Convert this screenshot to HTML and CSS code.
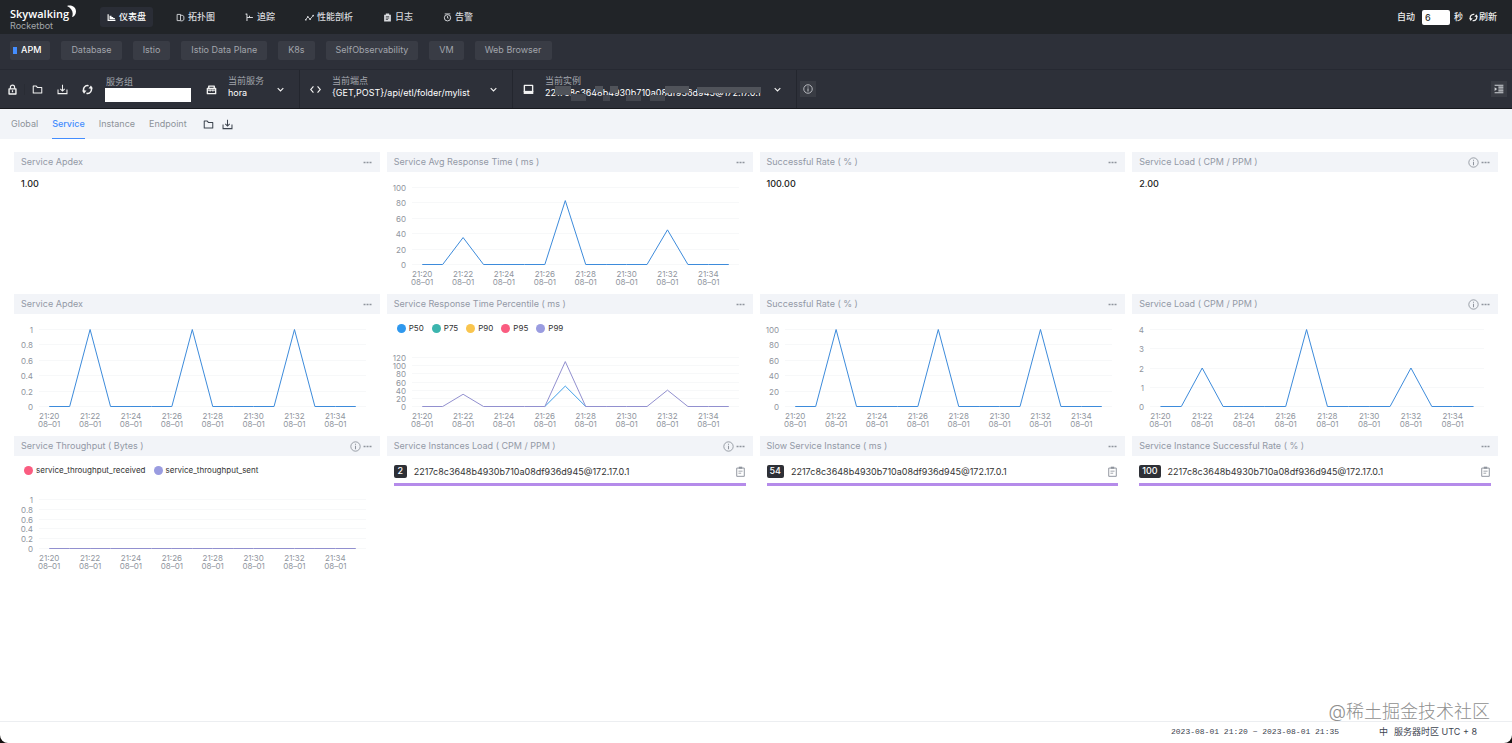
FILE: index.html
```html
<!DOCTYPE html>
<html lang="zh-CN">
<head>
  <meta charset="UTF-8">
  <meta name="viewport" content="width=device-width, initial-scale=1.0">
  <title>SkyWalking</title>
  <link rel="stylesheet" href="styles.css">
</head>
<body>
  <!-- shared icons -->
  <svg class="sprite" aria-hidden="true">
    <symbol id="i-folder" viewBox="0 0 16 16"><path d="M1.8 13V3h4.4l1.6 2h6.4v8z" fill="none" stroke="currentColor" stroke-width="1.5" stroke-linejoin="round"/></symbol>
    <symbol id="i-download" viewBox="0 0 16 16"><path d="M8 1v9M4.8 7L8 10.2 11.2 7M1.5 8v6h13V8" fill="none" stroke="currentColor" stroke-width="1.5"/></symbol>
    <symbol id="i-refresh" viewBox="0 0 16 16"><path d="M3.2 11A5.6 5.6 0 0 1 9.5 2.6M12.8 5A5.6 5.6 0 0 1 6.5 13.4" fill="none" stroke="currentColor" stroke-width="2.2"/><path d="M0 9.5h6.5L3 14zM9.5 6.5H16L13 2z" fill="currentColor"/></symbol>
    <symbol id="i-info" viewBox="0 0 16 16"><circle cx="8" cy="8" r="6.8" fill="none" stroke="currentColor" stroke-width="1.3"/><path d="M8 7v5M8 4v1.6" stroke="currentColor" stroke-width="1.5"/></symbol>
    <symbol id="i-more" viewBox="0 0 16 16"><path d="M1 6.5h3.5v3H1zM6.3 6.5h3.5v3H6.3zM11.6 6.5h3.5v3h-3.5z" fill="currentColor"/></symbol>
    <symbol id="i-down" viewBox="0 0 16 16"><path d="M3 5.5l5 5 5-5" fill="none" stroke="currentColor" stroke-width="2"/></symbol>
    <symbol id="i-copy" viewBox="0 0 16 16"><path d="M2.5 3h11v12h-11z" fill="none" stroke="currentColor" stroke-width="1.4" stroke-linejoin="round"/><path d="M5.5 1h5v3h-5z" fill="currentColor"/><path d="M5 7.5h6M5 10.5h4" stroke="currentColor" stroke-width="1.2"/></symbol>
  </svg>

  <div class="app">
    <header class="topbar">
      <a class="logo" href="#">
        <span class="logo-name">Skywalking<svg class="moon" viewBox="0 0 10 14"><path d="M0 .8C6-.6 10 2.5 10 7c0 3.500-2 5.500-4.500 6.200C7.500 9 6 3.500 0 .8z" fill="#fff"/></svg></span>
        <span class="logo-sub">Rocketbot</span>
      </a>
      <nav class="main-nav">
        <a class="active" href="#"><svg class="icon" viewBox="0 0 16 16"><path d="M1 2h2v10h12v2H1z" fill="currentColor"/><path d="M4.5 5H8v2h3v2h3v2H4.5z" fill="currentColor"/></svg>仪表盘</a>
        <a href="#"><svg class="icon" viewBox="0 0 16 16"><path d="M2 2.5h6v11H2zM8 4h3l3 2v6l-3 2H8" fill="none" stroke="currentColor" stroke-width="1.6"/></svg>拓扑图</a>
        <a href="#"><svg class="icon" viewBox="0 0 16 16"><path d="M1 2h3M3.5 2v12M3.5 8H14M8 5v3" fill="none" stroke="currentColor" stroke-width="1.8"/></svg>追踪</a>
        <a href="#"><svg class="icon" viewBox="0 0 16 16"><path d="M1 12l4-5 4 4 6-7" fill="none" stroke="currentColor" stroke-width="1.5"/><circle cx="1.5" cy="12" r="1.5" fill="currentColor"/><circle cx="5" cy="7" r="1.5" fill="currentColor"/><circle cx="9" cy="11" r="1.5" fill="currentColor"/><circle cx="14.5" cy="4.5" r="1.5" fill="currentColor"/></svg>性能剖析</a>
        <a href="#"><svg class="icon" viewBox="0 0 16 16"><path d="M2 3h3V1h6v2h3v12H2z" fill="currentColor"/><path d="M5 6.5h6M5 9h6M5 11.5h4" stroke="#212428" stroke-width="1.2"/></svg>日志</a>
        <a href="#"><svg class="icon" viewBox="0 0 16 16"><circle cx="8" cy="8.5" r="5.6" fill="none" stroke="currentColor" stroke-width="1.7"/><path d="M8 5v4h2M3 1.5h10" fill="none" stroke="currentColor" stroke-width="1.5"/></svg>告警</a>
      </nav>
      <div class="reload">
        <label for="auto">自动</label>
        <input id="auto" type="text" value="6">
        <span class="unit">秒</span>
        <button type="button"><svg class="icon"><use href="#i-refresh"/></svg>刷新</button>
      </div>
    </header>

    <nav class="groups">
      <button type="button" class="active">APM</button>
      <button type="button">Database</button>
      <button type="button">Istio</button>
      <button type="button">Istio Data Plane</button>
      <button type="button">K8s</button>
      <button type="button">SelfObservability</button>
      <button type="button">VM</button>
      <button type="button">Web Browser</button>
    </nav>

    <div class="toolbar">
      <button type="button" class="tool lock" aria-label="lock"><svg viewBox="0 0 16 16"><path d="M3 7h10v7.5H3z" fill="none" stroke="currentColor" stroke-width="2" stroke-linejoin="round"/><path d="M5 7V4.5a3 3 0 0 1 6 0V7M8 9v3" fill="none" stroke="currentColor" stroke-width="1.8"/></svg></button>
      <button type="button" class="tool" aria-label="open"><svg><use href="#i-folder"/></svg></button>
      <button type="button" class="tool" aria-label="export"><svg><use href="#i-download"/></svg></button>
      <button type="button" class="tool" aria-label="reload"><svg><use href="#i-refresh"/></svg></button>
      <div class="field group">
        <label for="group">服务组</label>
        <input id="group" type="text">
      </div>
      <div class="selector service">
        <svg class="kind" viewBox="0 0 16 16"><path d="M2 6.5h12V14H2zM4 6V3h8v3" fill="none" stroke="currentColor" stroke-width="2" stroke-linejoin="round"/><path d="M2 9h12M6 8v3M10 8v3" stroke="currentColor" stroke-width="1.4"/></svg>
        <div class="field">
          <label for="service">当前服务</label>
          <select id="service"><option>hora</option></select>
        </div>
        <svg class="arrow"><use href="#i-down"/></svg>
      </div>
      <div class="selector endpoint">
        <svg class="kind" viewBox="0 0 16 16"><path d="M5 3.5L1 8l4 4.5M11 3.5L15 8l-4 4.5" fill="none" stroke="currentColor" stroke-width="1.7"/></svg>
        <div class="field">
          <label for="endpoint">当前端点</label>
          <select id="endpoint"><option>{GET,POST}/api/etl/folder/mylist</option></select>
        </div>
        <svg class="arrow"><use href="#i-down"/></svg>
      </div>
      <div class="selector instance">
        <svg class="kind" viewBox="0 0 16 16"><path d="M2 2h12v9H2z" fill="none" stroke="currentColor" stroke-width="2" stroke-linejoin="round"/><path d="M1 10h14v4.5H1z" fill="currentColor"/></svg>
        <div class="field">
          <label for="instance">当前实例</label>
          <select id="instance"><option>2217c8c3648b4930b710a08df936d945@172.17.0.1</option></select>
          <svg class="mask" viewBox="0 0 217 16" aria-hidden="true"><path d="M10 0h16v9H10zM50 0h8v6h-8zM65 0h8v7h-8zM120 0h24v7h-24zM152 1h64v6h-64z" fill="#50535a"/><path d="M26 8h15v7H26zM58 9h7v6h-7zM81 9h15v6H81zM105 9h15v6h-15z" fill="#43464e"/></svg>
        </div>
        <svg class="arrow"><use href="#i-down"/></svg>
      </div>
      <button type="button" class="square" aria-label="info"><svg><use href="#i-info"/></svg></button>
      <button type="button" class="square last" aria-label="panel"><svg viewBox="0 0 16 16"><path d="M1 2h14M7 5h8M7 8h8M7 11h8M1 14h14" stroke="currentColor" stroke-width="1.8"/><path d="M1 5l4 3-4 3z" fill="currentColor"/></svg></button>
    </div>

    <nav class="tabs">
      <a href="#">Global</a>
      <a href="#" class="active">Service</a>
      <a href="#">Instance</a>
      <a href="#">Endpoint</a>
      <div class="tab-tools">
        <button type="button" aria-label="open"><svg><use href="#i-folder"/></svg></button>
        <button type="button" aria-label="export"><svg><use href="#i-download"/></svg></button>
      </div>
    </nav>

    <main class="board">
      <section class="panel">
        <h2>Service Apdex<svg class="more"><use href="#i-more"/></svg></h2>
        <p class="value">1.00</p>
      </section>
      <section class="panel">
        <h2>Service Avg Response Time ( ms )<svg class="more"><use href="#i-more"/></svg></h2>
        <div class="chart" data-chart="avg"></div>
      </section>
      <section class="panel">
        <h2>Successful Rate ( % )<svg class="more"><use href="#i-more"/></svg></h2>
        <p class="value">100.00</p>
      </section>
      <section class="panel">
        <h2>Service Load ( CPM / PPM )<svg class="tip"><use href="#i-info"/></svg><svg class="more"><use href="#i-more"/></svg></h2>
        <p class="value">2.00</p>
      </section>

      <section class="panel">
        <h2>Service Apdex<svg class="more"><use href="#i-more"/></svg></h2>
        <div class="chart" data-chart="apdex"></div>
      </section>
      <section class="panel">
        <h2>Service Response Time Percentile ( ms )<svg class="more"><use href="#i-more"/></svg></h2>
        <ul class="legend">
          <li class="blue">P50</li>
          <li class="teal">P75</li>
          <li class="yellow">P90</li>
          <li class="red">P95</li>
          <li class="purple">P99</li>
        </ul>
        <div class="chart" data-chart="percentile"></div>
      </section>
      <section class="panel">
        <h2>Successful Rate ( % )<svg class="more"><use href="#i-more"/></svg></h2>
        <div class="chart" data-chart="rate"></div>
      </section>
      <section class="panel">
        <h2>Service Load ( CPM / PPM )<svg class="tip"><use href="#i-info"/></svg><svg class="more"><use href="#i-more"/></svg></h2>
        <div class="chart" data-chart="load"></div>
      </section>

      <section class="panel">
        <h2>Service Throughput ( Bytes )<svg class="tip"><use href="#i-info"/></svg><svg class="more"><use href="#i-more"/></svg></h2>
        <ul class="legend">
          <li class="red">service_throughput_received</li>
          <li class="purple">service_throughput_sent</li>
        </ul>
        <div class="chart" data-chart="throughput"></div>
      </section>
      <section class="panel">
        <h2>Service Instances Load ( CPM / PPM )<svg class="tip"><use href="#i-info"/></svg><svg class="more"><use href="#i-more"/></svg></h2>
        <div class="rank"><b>2</b><span>2217c8c3648b4930b710a08df936d945@172.17.0.1</span><svg><use href="#i-copy"/></svg></div>
      </section>
      <section class="panel">
        <h2>Slow Service Instance ( ms )<svg class="more"><use href="#i-more"/></svg></h2>
        <div class="rank"><b>54</b><span>2217c8c3648b4930b710a08df936d945@172.17.0.1</span><svg><use href="#i-copy"/></svg></div>
      </section>
      <section class="panel">
        <h2>Service Instance Successful Rate ( % )<svg class="more"><use href="#i-more"/></svg></h2>
        <div class="rank"><b>100</b><span>2217c8c3648b4930b710a08df936d945@172.17.0.1</span><svg><use href="#i-copy"/></svg></div>
      </section>
    </main>

    <footer class="footer">
      <span class="range">2023-08-01 21:20 ~ 2023-08-01 21:35</span>
      <span class="lang">中</span>
      <span>服务器时区 UTC + 8</span>
    </footer>
    <div class="watermark">@稀土掘金技术社区</div>
  </div>

  <script src="charts.js"></script>
</body>
</html>
```
FILE: styles.css
```css
* {
  box-sizing: border-box;
}

body {
  margin: 0;
  background: #14100f;
  font-family: Inter, "Noto Sans CJK SC", sans-serif;
  font-size: 9px;
  line-height: 12px;
  color: #3d444f;
}

a {
  color: inherit;
  text-decoration: none;
}

button, input, select {
  font: inherit;
  color: inherit;
  margin: 0;
  padding: 0;
  border: 0;
  background: none;
}

button {
  cursor: pointer;
}

svg {
  display: block;
  flex: none;
}

.sprite {
  position: absolute;
  width: 0;
  height: 0;
}

.app {
  position: relative;
  display: flex;
  flex-direction: column;
  min-height: 100vh;
  background: #fff;
  border-radius: 0 0 8px 8px;
  overflow: hidden;
}

.icon {
  width: 9px;
  height: 9px;
}

/* top bar */
.topbar {
  display: flex;
  align-items: center;
  height: 34px;
  padding: 0 15px 0 10px;
  background: #212428;
  color: #d8dade;
  font-weight: 500;
}

.logo {
  width: 90px;
  padding-top: 2px;
}

.logo-name {
  display: flex;
  font: 600 11px/14px "Open Sans", sans-serif;
  color: #fff;
}

.moon {
  width: 9px;
  height: 13px;
  margin: -2px 0 0 -2px;
}

.logo-sub {
  display: block;
  font-size: 9px;
  font-weight: 400;
  line-height: 9px;
  color: #a3a6ab;
}

.main-nav {
  display: flex;
  gap: 16px;
}

.main-nav a {
  display: flex;
  align-items: center;
  gap: 3px;
  height: 20px;
  padding: 0 7px;
  border-radius: 3px;
}

.main-nav .active {
  background: #2a2d36;
  color: #fff;
}

.reload {
  display: flex;
  align-items: center;
  margin-left: auto;
  color: #eee;
}

.reload input {
  width: 28px;
  height: 15px;
  margin: 0 4px 0 7px;
  padding: 0 3px;
  border-radius: 2px;
  background: #fff;
  color: #333;
}

.unit {
  margin-right: 6px;
}

.reload button {
  display: flex;
  align-items: center;
  gap: 1px;
}

/* dashboard groups */
.groups {
  display: flex;
  align-items: center;
  gap: 11px;
  height: 35px;
  padding: 0 10px 3px;
  background: #2d3039;
}

.groups button {
  height: 19px;
  padding: 0 10px;
  border-radius: 2px;
  background: #393c45;
  color: #a2a5ac;
}

.groups .active {
  display: flex;
  align-items: center;
  gap: 4px;
  padding: 0 9px 0 3px;
  color: #fff;
  font-weight: 500;
}

.groups .active::before {
  content: "";
  width: 4px;
  height: 7px;
  background: #448dfe;
}

/* selectors */
.toolbar {
  display: flex;
  align-items: center;
  height: 40px;
  padding-right: 5px;
  border-top: 1px solid #262932;
  border-bottom: 1px solid #17191e;
  background: #2d3039;
  color: #f2f2f2;
}

.tool {
  display: flex;
  justify-content: center;
  width: 25px;
}

.tool svg, .kind {
  width: 11px;
  height: 11px;
}

.lock {
  border-right: 1px solid #292c34;
}

.field {
  position: relative;
  display: flex;
  flex-direction: column;
  flex: 1;
  padding-bottom: 4px;
}

.field label {
  padding-left: 1px;
  line-height: 12px;
  white-space: nowrap;
  color: #a2a5ac;
}

.group {
  flex: none;
  width: 86px;
  margin: 0 5px;
  padding-bottom: 0;
}

.group input {
  height: 14px;
  background: #fff;
  color: #333;
}

.selector {
  display: flex;
  align-items: center;
  gap: 11px;
  height: 100%;
  padding: 0 14px 0 10px;
  border-right: 1px solid #23262e;
}

.service {
  width: 104px;
}

.endpoint {
  width: 213px;
}

.instance {
  width: 284px;
}

.selector .field {
  min-width: 0;
}

.selector label {
  padding: 0;
}

.selector select {
  height: 12px;
  appearance: none;
  outline: none;
  color: #fff;
}

.arrow {
  width: 9px;
  height: 9px;
}

.mask {
  position: absolute;
  left: 0;
  bottom: 1px;
  width: 217px;
  height: 16px;
}

.square {
  display: flex;
  align-items: center;
  justify-content: center;
  width: 16px;
  height: 16px;
  margin-left: 3px;
  background: #393c44;
  color: #d0d2d6;
}

.square svg {
  width: 10px;
  height: 10px;
}

.last {
  margin-left: auto;
}

/* tabs */
.tabs {
  display: flex;
  align-items: center;
  gap: 14px;
  height: 30px;
  padding: 0 11px;
  background: #f2f4f8;
  color: #8d9299;
}

.tabs a {
  height: 30px;
  line-height: 29px;
}

.tabs .active {
  border-bottom: 1px solid #448dfe;
  color: #448dfe;
  font-weight: 500;
}

.tab-tools {
  display: flex;
  gap: 8px;
  padding-left: 2px;
  color: #3d444f;
}

.tab-tools svg {
  width: 11px;
  height: 11px;
}

/* panels */
.board {
  display: grid;
  grid-template-columns: repeat(4, minmax(0, 1fr));
  grid-auto-rows: 134px;
  gap: 8px 7px;
  flex: 1;
  padding: 13px 14px;
}

.panel h2 {
  display: flex;
  align-items: center;
  height: 20px;
  margin: 0;
  padding: 0 8px 0 7px;
  background: #f2f4f8;
  color: #9299a6;
  font-size: 9px;
  font-weight: 400;
}

.panel h2 svg {
  width: 9px;
  height: 9px;
  color: #8f949d;
}

.panel h2 svg:first-of-type {
  margin-left: auto;
}

.panel h2 .tip {
  width: 11px;
  height: 11px;
  margin-right: 2px;
}

.value {
  margin: 6px 7px;
  color: #222;
  font-weight: 500;
}

.legend {
  display: flex;
  gap: 8px;
  height: 28px;
  margin: 0;
  padding: 0 10px;
  list-style: none;
  align-items: center;
  font-size: 8px;
  color: #333;
}

.legend li {
  display: flex;
  align-items: center;
  gap: 3px;
}

.legend li::before {
  content: "";
  width: 9px;
  height: 9px;
  border-radius: 50%;
}

.legend .blue::before { background: #2f98ee; }
.legend .teal::before { background: #3cb5ae; }
.legend .yellow::before { background: #f9c54e; }
.legend .red::before { background: #fa5c80; }
.legend .purple::before { background: #9a9ce0; }

.chart text {
  font-size: 8px;
  fill: #90959e;
}

.chart .grid {
  stroke: #f7f8f9;
}

.chart polyline {
  fill: none;
  stroke-width: 1;
}

.rank {
  display: flex;
  align-items: center;
  height: 30px;
  margin: 0 7px;
  padding-top: 4px;
  border-bottom: 3px solid #b58bea;
  color: #333;
}

.rank b {
  min-width: 13px;
  height: 13px;
  margin-right: 7px;
  padding: 0 3px;
  border-radius: 2px;
  background: #2e3036;
  color: #fff;
  font-weight: 500;
  text-align: center;
}

.rank svg {
  width: 11px;
  height: 11px;
  margin-left: auto;
  color: #8f949d;
}

/* footer */
.footer {
  display: flex;
  align-items: center;
  justify-content: flex-end;
  height: 22px;
  padding: 0 35px 2px 0;
  border-top: 1px solid #eceef1;
}

.range {
  font-family: "Liberation Mono", monospace;
  font-size: 8px;
}

.lang {
  margin: 0 6px 0 40px;
}

.watermark {
  position: absolute;
  right: 22px;
  bottom: 18px;
  font-size: 18px;
  font-weight: 300;
  line-height: 26px;
  color: #8f8f8f;
}
```
FILE: charts.js
```js
const BLUE = "#3d8bdb";
const PURPLE = "#9290cf";

// one value per minute, 21:20 - 21:35
function spikes(a, b, c) {
  const data = new Array(16).fill(0);
  data[2] = a;
  data[7] = b;
  data[12] = c;
  return data;
}

const charts = {
  avg: { ticks: [0, 20, 40, 60, 80, 100], lines: [[BLUE, spikes(35, 83, 45)]] },
  apdex: { ticks: [0, 0.2, 0.4, 0.6, 0.8, 1], lines: [[BLUE, spikes(1, 1, 1)]] },
  percentile: {
    ticks: [0, 20, 40, 60, 80, 100, 120],
    small: true,
    // P50 only differs from the others between 21:26 and 21:28
    lines: [["#3f9fe8", [0, 50, 0], 6], [PURPLE, spikes(30, 110, 40)]]
  },
  rate: { ticks: [0, 20, 40, 60, 80, 100], lines: [[BLUE, spikes(100, 100, 100)]] },
  load: { ticks: [0, 1, 2, 3, 4], narrow: true, lines: [[BLUE, spikes(2, 4, 2)]] },
  throughput: { ticks: [0, 0.2, 0.4, 0.6, 0.8, 1], small: true, lines: [[PURPLE, spikes(0, 0, 0)]] }
};

function draw(el) {
  const chart = charts[el.dataset.chart];
  const width = el.clientWidth;
  const left = chart.narrow ? 18 : 25;
  const right = width - 14;
  const top = 15;
  const bottom = chart.small ? 64 : 92;
  const max = chart.ticks[chart.ticks.length - 1];
  const step = (right - left) / 16;
  const x = i => left + step * (i + 0.5);
  const y = v => bottom - (bottom - top) * v / max;

  let out = "";
  chart.ticks.forEach(t => {
    const line = Math.round(y(t)) + 0.5;
    out += `<line class="grid" x1="${left}" x2="${right}" y1="${line}" y2="${line}"/>`;
    out += `<text x="${left - 6}" y="${y(t) + 4}" text-anchor="end">${t}</text>`;
  });
  for (let i = 0; i < 16; i += 2) {
    out += `<text x="${x(i)}" y="${bottom + 13}" text-anchor="middle">21:${20 + i}</text>`;
    out += `<text x="${x(i)}" y="${bottom + 21}" text-anchor="middle">08–01</text>`;
  }
  chart.lines.forEach(([color, data, start = 0]) => {
    const points = data.map((v, i) => x(start + i) + "," + (y(v) + 0.5)).join(" ");
    out += `<polyline points="${points}" stroke="${color}"/>`;
  });
  el.innerHTML = `<svg width="${width}" height="${bottom + 22}">${out}</svg>`;
}

function drawAll() {
  document.querySelectorAll(".chart").forEach(draw);
}

drawAll();
window.addEventListener("resize", drawAll);
```
